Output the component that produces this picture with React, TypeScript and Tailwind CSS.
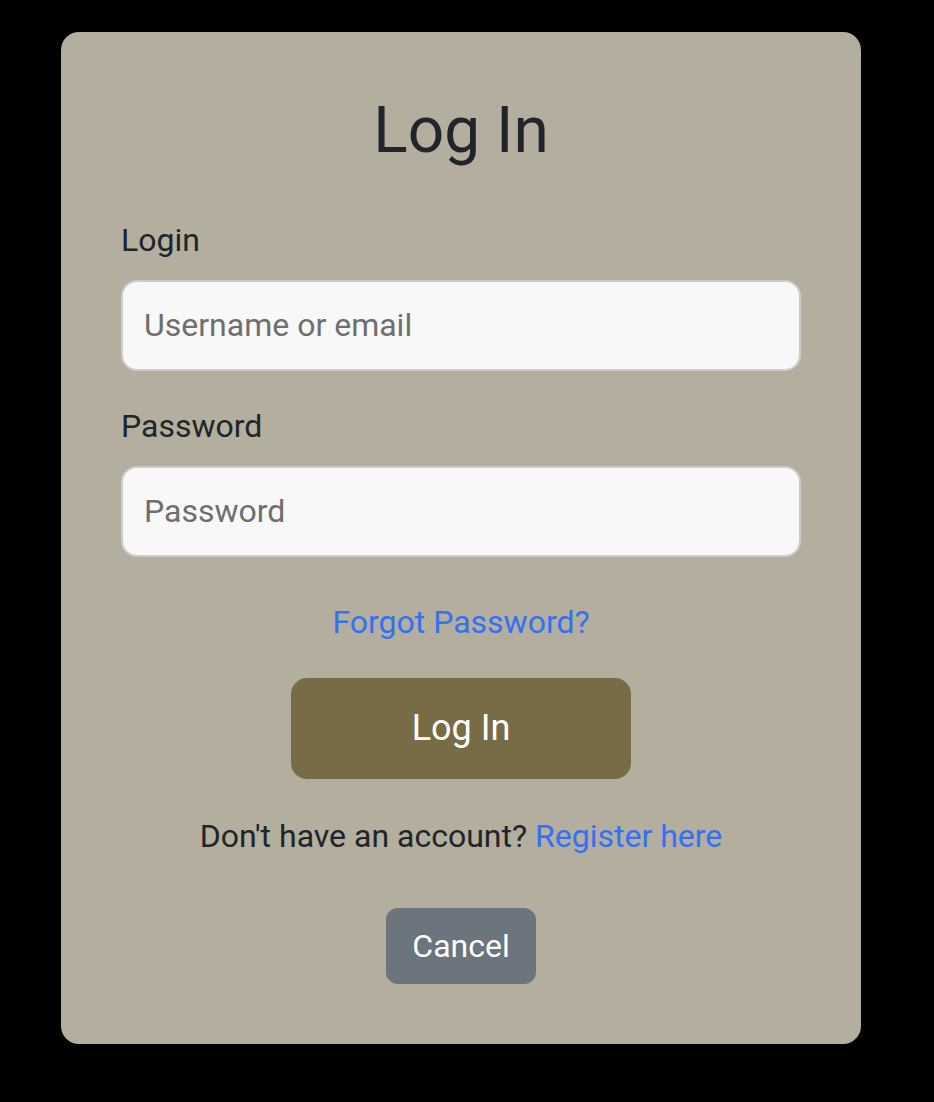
export default function App() {
  return (
    <div className="min-h-[1102px] w-full bg-black pt-[32px] pl-[61px] font-['Roboto','Liberation_Sans',sans-serif] text-[#212529]">
      <div className="flex w-[800px] flex-col rounded-[18px] bg-[#b3ae9d] px-[60px] pt-[61px] pb-[60px]">
        <h1 className="text-center text-[64px] leading-[1.2] font-normal">Log In</h1>

        <form className="mt-[46px] flex flex-col">
          <label htmlFor="login" className="mb-[16px] text-[32px] leading-[48px]">
            Login
          </label>
          <input
            id="login"
            type="text"
            placeholder="Username or email"
            className="h-[91px] w-full rounded-[16px] border-2 border-[#cbcbcb] bg-[#f8f8f8] px-[21px] text-[32px] leading-[48px] text-[#212529] outline-none placeholder:text-[#6e6e6e]"
          />

          <label htmlFor="password" className="mt-[31px] mb-[16px] text-[32px] leading-[48px]">
            Password
          </label>
          <input
            id="password"
            type="password"
            placeholder="Password"
            className="h-[91px] w-full rounded-[16px] border-2 border-[#cbcbcb] bg-[#f8f8f8] px-[21px] text-[32px] leading-[48px] text-[#212529] outline-none placeholder:text-[#6e6e6e]"
          />

          <div className="mt-[41px] text-center text-[32px] leading-[48px]">
            <a href="#" className="text-[#3371f2]">
              Forgot Password?
            </a>
          </div>

          <div className="mt-[32px] flex justify-center">
            <button
              type="submit"
              className="h-[101px] w-[340px] rounded-[16px] bg-[#786c46] text-[36px] text-white"
            >
              Log In
            </button>
          </div>

          <p className="mt-[33px] text-center text-[32px] leading-[48px]">
            Don't have an account?{' '}
            <a href="#" className="text-[#3371f2]">
              Register here
            </a>
          </p>

          <div className="mt-[48px] flex justify-center">
            <button
              type="button"
              className="rounded-[12px] border-2 border-[#6c757d] bg-[#6c757d] px-[24px] py-[12px] text-[32px] leading-[48px] text-white"
            >
              Cancel
            </button>
          </div>
        </form>
      </div>
    </div>
  );
}
